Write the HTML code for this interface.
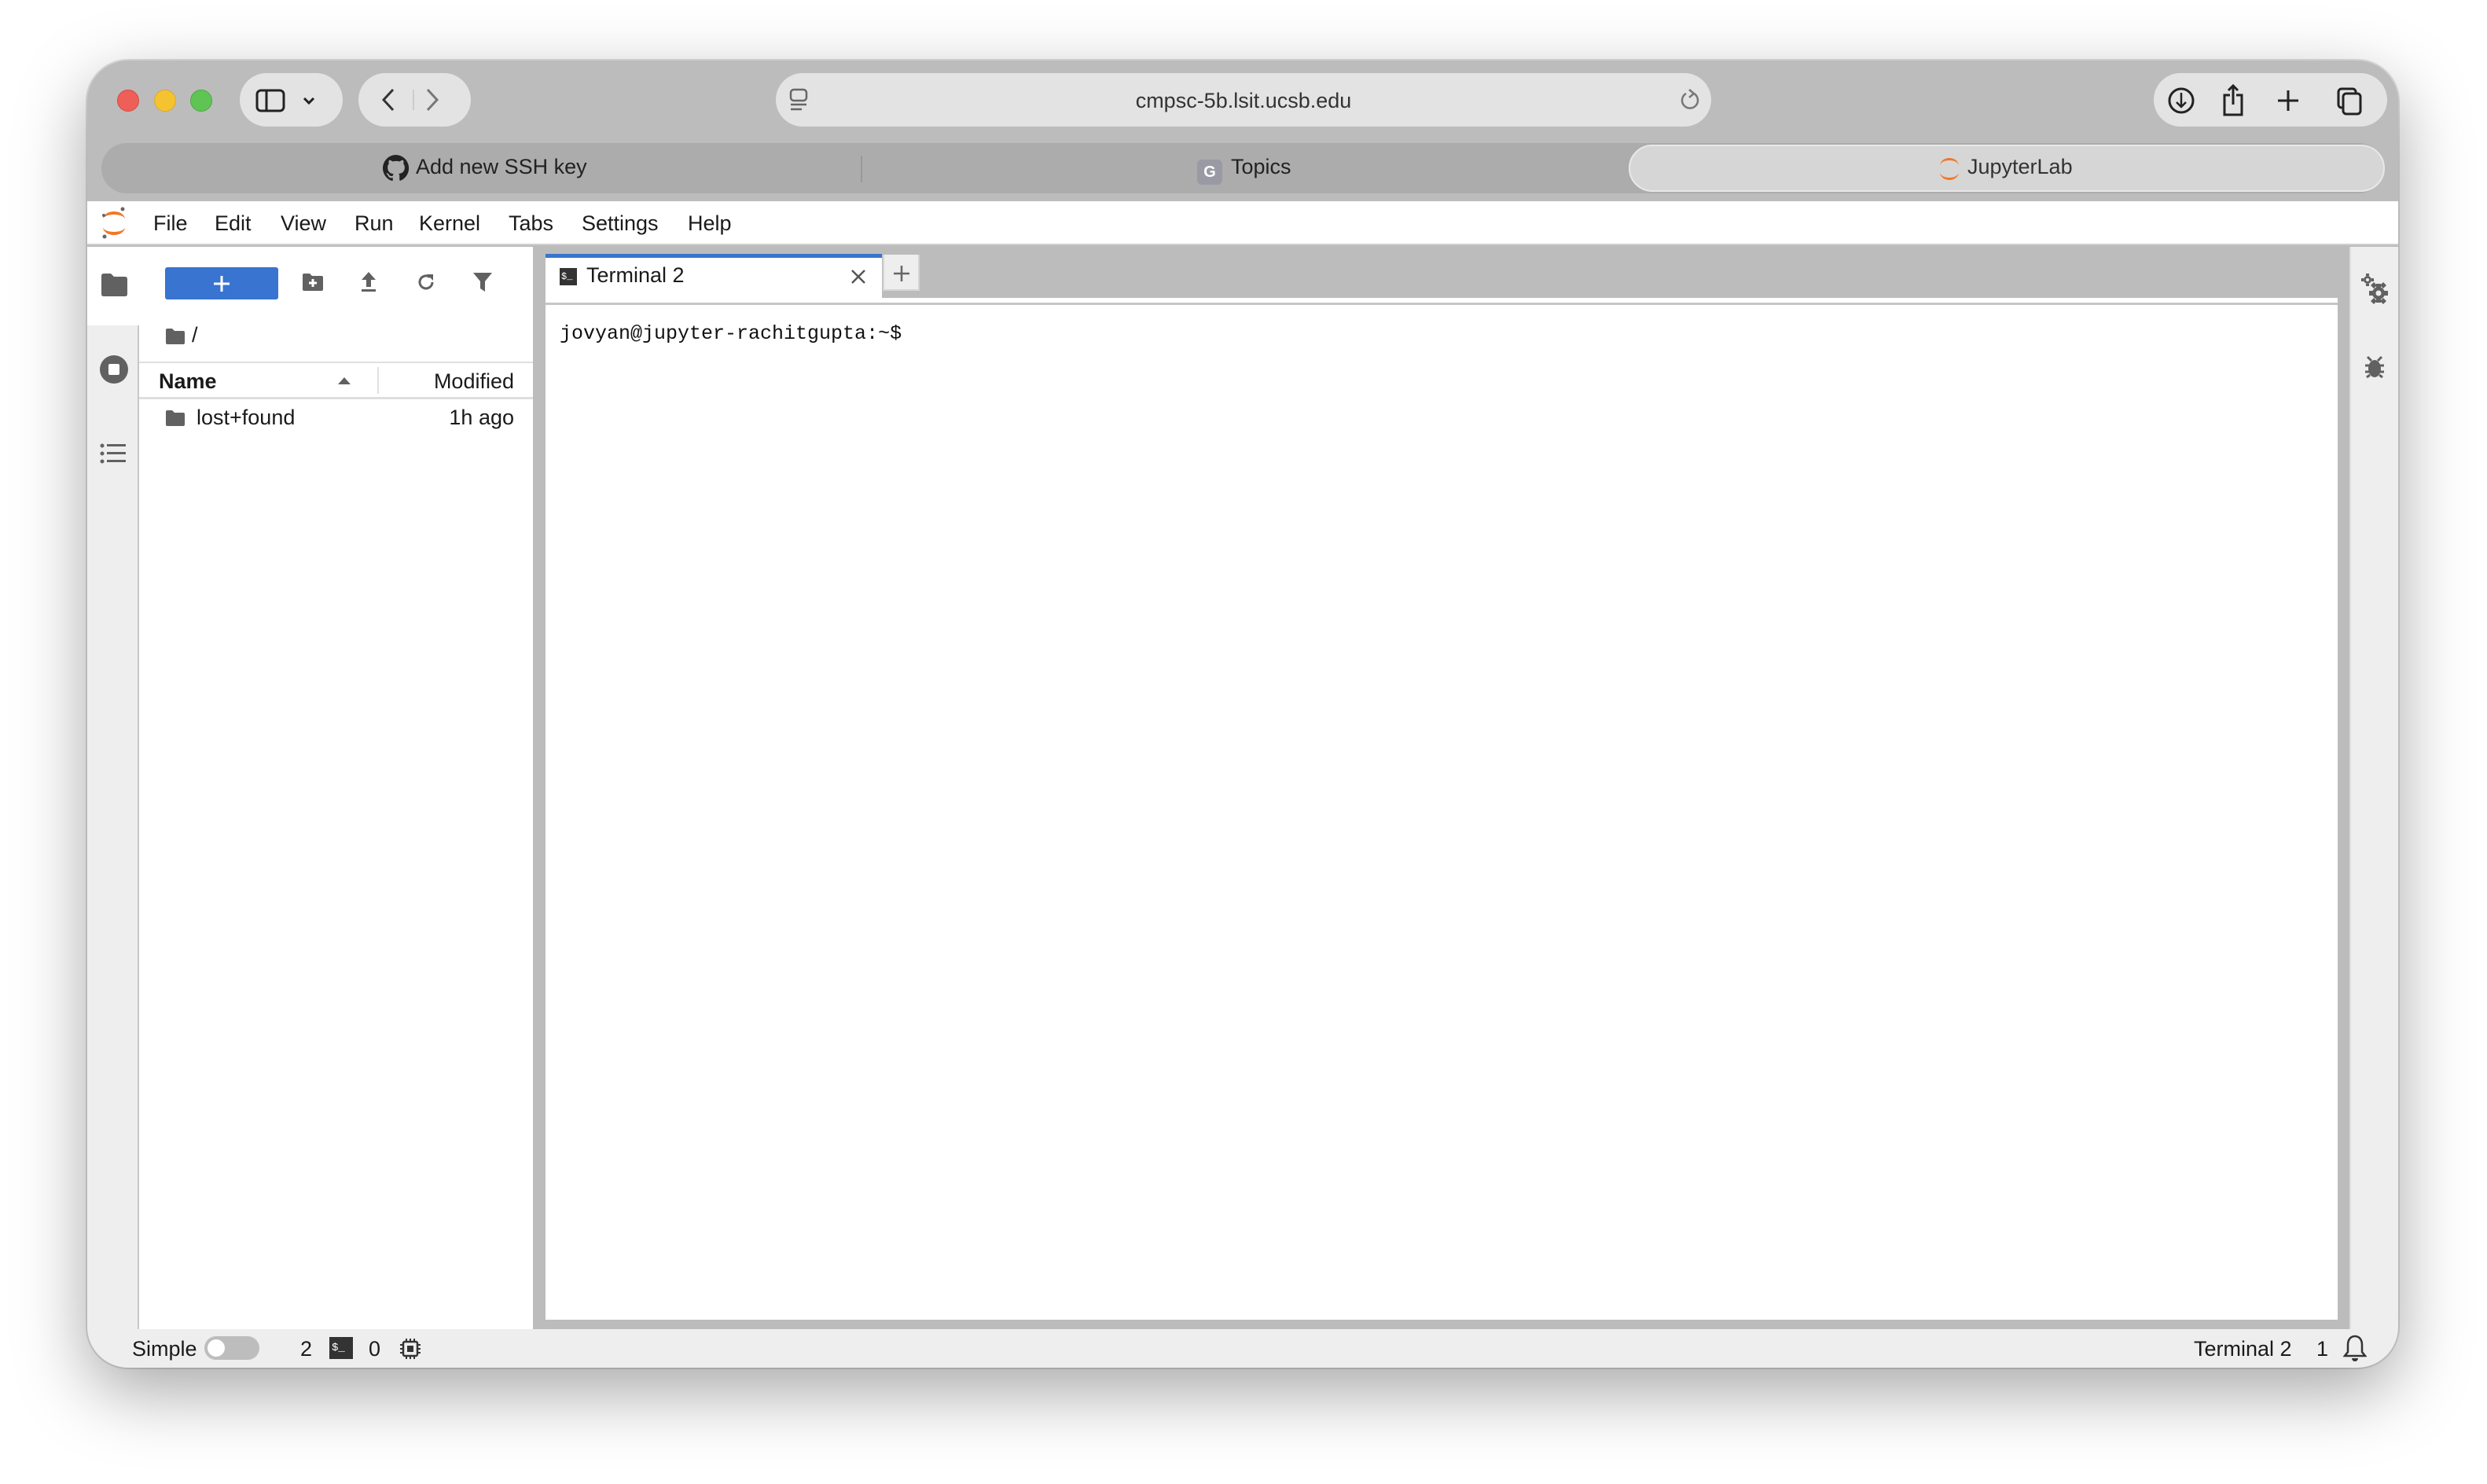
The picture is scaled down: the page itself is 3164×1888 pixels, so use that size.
<!DOCTYPE html>
<html><head><meta charset="utf-8"><style>
*{margin:0;padding:0;box-sizing:border-box}
body{width:3164px;height:1888px;background:#fff;position:relative;overflow:hidden;font-family:"Liberation Sans",Arial,sans-serif;color:#1a1a1a}
.abs{position:absolute}
#win{position:absolute;left:111px;top:77px;width:2940px;height:1663px;border-radius:52px;overflow:hidden;background:#bcbcbc;box-shadow:0 30px 90px rgba(0,0,0,.35),0 0 0 2px rgba(0,0,0,.12)}
.pill{position:absolute;background:#e3e3e3;border-radius:34px;top:16px;height:68px}
.dot{position:absolute;top:37px;width:28px;height:28px;border-radius:50%}
.t{position:absolute;font-size:27px;white-space:nowrap}
.ic{position:absolute}
</style></head><body>
<div id="win">
 <div class="dot" style="left:38px;background:#ee5f57;border:1px solid #d44b44"></div>
 <div class="dot" style="left:85px;background:#f6c330;border:1px solid #d9a92a"></div>
 <div class="dot" style="left:131px;background:#5fc454;border:1px solid #4ea845"></div>
 <div class="pill" style="left:194px;width:131px"></div>
 <svg class="ic" style="left:214px;top:35px" width="76" height="32" viewBox="0 0 76 32"><rect x="2" y="3" width="34" height="26" rx="5" fill="none" stroke="#222" stroke-width="3"/><line x1="14" y1="3" x2="14" y2="29" stroke="#222" stroke-width="3"/><path d="M62 13l6 6 6-6" fill="none" stroke="#222" stroke-width="3"/></svg>
 <div class="pill" style="left:345px;width:143px"></div>
 <svg class="ic" style="left:365px;top:33px" width="100" height="34" viewBox="0 0 100 34"><path d="M24 4L12 17l12 13" fill="none" stroke="#333" stroke-width="3"/><line x1="50" y1="4" x2="50" y2="30" stroke="#ccc" stroke-width="2"/><path d="M68 4l12 13-12 13" fill="none" stroke="#777" stroke-width="3"/></svg>
 <div class="pill" style="left:876px;width:1190px"></div>
 <svg class="ic" style="left:891px;top:34px" width="30" height="34" viewBox="0 0 30 34"><rect x="4" y="3" width="20" height="14" rx="4" fill="none" stroke="#666" stroke-width="2.5"/><line x1="4" y1="22" x2="24" y2="22" stroke="#666" stroke-width="2.5"/><line x1="4" y1="28" x2="18" y2="28" stroke="#666" stroke-width="2.5"/></svg>
 <div class="t" style="left:876px;width:1190px;text-align:center;top:36px;color:#333">cmpsc-5b.lsit.ucsb.edu</div>
 <svg class="ic" style="left:2024px;top:34px" width="30" height="32" viewBox="0 0 30 32"><path d="M20 8a10 10 0 1 1-10 0" fill="none" stroke="#777" stroke-width="2.5"/><path d="M14 3l6 5-6 5" fill="none" stroke="#777" stroke-width="2.5"/></svg>
 <div class="pill" style="left:2629px;width:297px"></div>
 <svg class="ic" style="left:2640px;top:28px" width="280" height="46" viewBox="0 0 280 46"><circle cx="24" cy="23" r="15" fill="none" stroke="#222" stroke-width="3"/><path d="M24 13v18M18 25l6 6 6-6" fill="none" stroke="#222" stroke-width="2.5"/><path d="M86 16h-7v25h22V16h-7M90 4v24M84 10l6-6 6 6" fill="none" stroke="#222" stroke-width="3"/><path d="M160 10v26M147 23h26" stroke="#222" stroke-width="3"/><rect x="224" y="8" width="22" height="24" rx="4" fill="none" stroke="#222" stroke-width="3"/><rect x="230" y="14" width="22" height="26" rx="4" fill="#e3e3e3" stroke="#222" stroke-width="3"/></svg>
 <div class="abs" style="left:18px;top:105px;width:2904px;height:64px;background:#acacac;border-radius:32px"></div>
 <div class="abs" style="left:984px;top:121px;width:2px;height:34px;background:#999"></div>
 <svg class="ic" style="left:376px;top:120px" width="34" height="34" viewBox="0 0 16 16"><path fill="#222" d="M8 0a8 8 0 0 0-2.5 15.6c.4 0 .5-.2.5-.4v-1.5c-2.2.5-2.7-1-2.7-1-.4-.9-.9-1.2-.9-1.2-.7-.5.1-.5.1-.5.8.1 1.200.8 1.2.8.7 1.3 1.9.9 2.3.7.1-.5.3-.9.5-1.1-1.8-.2-3.6-.9-3.6-4 0-.9.3-1.6.8-2.1-.1-.2-.4-1 .1-2.100 0 0 .7-.2 2.2.8a7.5 7.5 0 0 1 4 0c1.5-1 2.2-.8 2.2-.8.4 1.1.2 1.9.1 2.1.5.6.8 1.3.8 2.1 0 3.1-1.9 3.7-3.6 3.9.3.3.5.8.5 1.5v2.2c0 .2.1.5.6.4A8 8 0 0 0 8 0z"/></svg>
 <div class="t" style="left:418px;top:120px;color:#222">Add new SSH key</div>
 <div class="abs" style="left:1412px;top:126px;width:32px;height:32px;border-radius:6px;background:#9a9aa4;color:#fff;font-weight:bold;font-size:20px;text-align:center;line-height:32px">G</div>
 <div class="t" style="left:1455px;top:120px;color:#222">Topics</div>
 <div class="abs" style="left:1961px;top:107px;width:962px;height:60px;background:#d6d6d6;border-radius:30px;border:2px solid #e8e8e8"></div>
 <svg class="ic" style="left:2354px;top:121px" width="30" height="34" viewBox="0 0 30 34"><path d="M3 13a12 10 0 0 1 24 0a12 7 0 0 0-24 0z" fill="#f37726"/><path d="M3 21a12 10 0 0 0 24 0a12 7 0 0 1-24 0z" fill="#f37726"/></svg>
 <div class="t" style="left:2392px;top:120px;color:#333">JupyterLab</div>
 <div class="abs" style="left:0;top:179px;width:2940px;height:56px;background:#fff;border-bottom:2px solid #cfcfcf"></div>
 <svg class="ic" style="left:16px;top:184px" width="36" height="46" viewBox="0 0 36 46"><path d="M4 18a14 10 0 0 1 28 0a14 6 0 0 0-28 0z" fill="#f37726"/><path d="M4 28a14 10 0 0 0 28 0a14 6 0 0 1-28 0z" fill="#f37726"/><circle cx="29" cy="5" r="2.5" fill="#666"/><circle cx="5" cy="13" r="2" fill="#666"/><circle cx="6" cy="40" r="2.5" fill="#666"/></svg>
 <div class="t" style="left:84px;top:192px">File</div>
 <div class="t" style="left:162px;top:192px">Edit</div>
 <div class="t" style="left:246px;top:192px">View</div>
 <div class="t" style="left:340px;top:192px">Run</div>
 <div class="t" style="left:422px;top:192px">Kernel</div>
 <div class="t" style="left:536px;top:192px">Tabs</div>
 <div class="t" style="left:629px;top:192px">Settings</div>
 <div class="t" style="left:764px;top:192px">Help</div>
 <div class="abs" style="left:0;top:237px;width:66px;height:1377px;background:#eee;border-right:2px solid #c8c8c8"></div>
 <div class="abs" style="left:0;top:237px;width:66px;height:100px;background:#fff"></div>
 <svg class="ic" style="left:16px;top:270px" width="36" height="30" viewBox="0 0 36 30"><path d="M2 4q0-3 3-3h9l4 4h14q3 0 3 3v19q0 3-3 3H5q-3 0-3-3z" fill="#616161"/></svg>
 <svg class="ic" style="left:14px;top:373px" width="40" height="40" viewBox="0 0 40 40"><circle cx="20" cy="20" r="18" fill="#616161"/><rect x="13" y="13" width="14" height="14" rx="2" fill="#fff"/></svg>
 <svg class="ic" style="left:16px;top:486px" width="34" height="28" viewBox="0 0 34 28"><g fill="#616161"><circle cx="3" cy="4" r="2.5"/><circle cx="3" cy="14" r="2.5"/><circle cx="3" cy="24" r="2.5"/><rect x="9" y="2" width="24" height="3"/><rect x="9" y="12" width="24" height="3"/><rect x="9" y="22" width="24" height="3"/></g></svg>
 <div class="abs" style="left:66px;top:237px;width:501px;height:1377px;background:#fff"></div>
 <div class="abs" style="left:99px;top:263px;width:144px;height:41px;background:#3874d0;border-radius:3px"></div>
 <svg class="ic" style="left:159px;top:272px" width="24" height="24"><path d="M12 2v20M2 12h20" stroke="#fff" stroke-width="3"/></svg>
 <svg class="ic" style="left:273px;top:270px" width="28" height="24" viewBox="0 0 28 24"><path d="M1 3q0-2 2-2h7l3 3h12q2 0 2 2v15q0 2-2 2H3q-2 0-2-2z" fill="#616161"/><path d="M14 8v10M9 13h10" stroke="#fff" stroke-width="3"/></svg>
 <svg class="ic" style="left:346px;top:268px" width="24" height="28" viewBox="0 0 24 28"><path d="M12 1L3 11h6v9h6v-9h6z" fill="#616161"/><rect x="3" y="23" width="18" height="3" fill="#616161"/></svg>
 <svg class="ic" style="left:418px;top:269px" width="26" height="26" viewBox="0 0 26 26"><path d="M21 13a8 8 0 1 1-3-6.3" fill="none" stroke="#616161" stroke-width="3"/><path d="M14 3h8v8z" fill="#616161"/></svg>
 <svg class="ic" style="left:490px;top:268px" width="26" height="28" viewBox="0 0 26 28"><path d="M1 2h24l-9 11v13l-6-4v-9z" fill="#616161"/></svg>
 <svg class="ic" style="left:99px;top:340px" width="26" height="22" viewBox="0 0 26 22"><path d="M1 3q0-2 2-2h6l3 3h11q2 0 2 2v13q0 2-2 2H3q-2 0-2-2z" fill="#616161"/></svg>
 <div class="t" style="left:133px;top:334px">/</div>
 <div class="abs" style="left:66px;top:383px;width:501px;height:2px;background:#e0e0e0"></div>
 <div class="t" style="left:91px;top:393px;font-weight:bold">Name</div>
 <svg class="ic" style="left:318px;top:401px" width="18" height="12"><path d="M1 11L9 2l8 9z" fill="#616161"/></svg>
 <div class="abs" style="left:369px;top:390px;width:2px;height:34px;background:#e0e0e0"></div>
 <div class="t" style="left:371px;width:172px;text-align:right;top:393px">Modified</div>
 <div class="abs" style="left:66px;top:428px;width:501px;height:3px;background:#dedede"></div>
 <svg class="ic" style="left:99px;top:444px" width="26" height="22" viewBox="0 0 26 22"><path d="M1 3q0-2 2-2h6l3 3h11q2 0 2 2v13q0 2-2 2H3q-2 0-2-2z" fill="#616161"/></svg>
 <div class="t" style="left:139px;top:439px">lost+found</div>
 <div class="t" style="left:371px;width:172px;text-align:right;top:439px">1h ago</div>
 <div class="abs" style="left:567px;top:237px;width:2311px;height:1377px;background:#bcbcbc"></div>
 <div class="abs" style="left:583px;top:246px;width:428px;height:56px;background:#fff;border-top:5px solid #3874d0"></div>
 <div class="abs" style="left:601px;top:264px;width:22px;height:22px;background:#333;color:#fff;font-size:12px;line-height:22px;padding-left:2px;font-family:'Liberation Mono',monospace">$_</div>
 <div class="t" style="left:635px;top:258px">Terminal 2</div>
 <svg class="ic" style="left:970px;top:264px" width="22" height="22"><path d="M3 3l16 16M19 3L3 19" stroke="#555" stroke-width="2.5"/></svg>
 <div class="abs" style="left:1012px;top:247px;width:47px;height:46px;background:#eee;border:2px solid #d5d5d5;border-top:none"></div>
 <svg class="ic" style="left:1024px;top:259px" width="24" height="24"><path d="M12 2v20M2 12h20" stroke="#666" stroke-width="2.5"/></svg>
 <div class="abs" style="left:583px;top:302px;width:2280px;height:1300px;background:#fff"></div>
 <div class="abs" style="left:583px;top:308px;width:2280px;height:3px;background:#c6c6c6"></div>
 <div class="abs" style="left:601px;top:333px;font-family:'Liberation Mono',monospace;font-size:25px;color:#111">jovyan@jupyter-rachitgupta:~$</div>
 <div class="abs" style="left:2878px;top:237px;width:62px;height:1377px;background:#eee;border-left:2px solid #ddd"></div>
 <svg class="ic" style="left:2892px;top:270px" width="36" height="40" viewBox="0 0 36 40">
  <g fill="#616161">
   <circle cx="9" cy="9" r="5"/><path d="M7 1h4v3H7zM7 14h4v3H7zM1 7h3v4H1zM14 7h3v4h-3z"/>
   <circle cx="23" cy="26" r="8"/><path d="M20 14h6v5h-6zM20 33h6v5h-6zM11 23h5v6h-5zM30 23h5v6h-5z"/>
   <path d="M13 16l4-4 4 4-4 4zM25 16l4-4 4 4-4 4zM13 36l4-4 4 4-4 4zM25 36l4-4 4 4-4 4z"/>
  </g>
  <circle cx="9" cy="9" r="2" fill="#eee"/><circle cx="23" cy="26" r="3.5" fill="#eee"/>
 </svg>
 <svg class="ic" style="left:2896px;top:374px" width="28" height="32" viewBox="0 0 28 32"><ellipse cx="14" cy="18" rx="8" ry="11" fill="#616161"/><path d="M5 3l5 5M23 3l-5 5M2 14h24M2 22h24M4 29l4-3M24 29l-4-3" stroke="#616161" stroke-width="3"/></svg>
 <div class="abs" style="left:0;top:1614px;width:2940px;height:49px;background:#eee"></div>
 <div class="t" style="left:57px;top:1624px">Simple</div>
 <div class="abs" style="left:149px;top:1623px;width:70px;height:30px;border-radius:15px;background:#bdbdbd"></div>
 <div class="abs" style="left:153px;top:1627px;width:22px;height:22px;border-radius:50%;background:#fff"></div>
 <div class="t" style="left:271px;top:1624px">2</div>
 <div class="abs" style="left:308px;top:1624px;width:30px;height:28px;background:#333;color:#fff;font-size:14px;line-height:28px;padding-left:3px;font-family:'Liberation Mono',monospace">$_</div>
 <div class="t" style="left:358px;top:1624px">0</div>
 <svg class="ic" style="left:397px;top:1625px" width="28" height="28" viewBox="0 0 28 28"><rect x="5" y="5" width="18" height="18" rx="2" fill="none" stroke="#333" stroke-width="2.5"/><rect x="10" y="10" width="8" height="8" fill="#333"/><path d="M9 1v4M14 1v4M19 1v4M9 23v4M14 23v4M19 23v4M1 9h4M1 14h4M1 19h4M23 9h4M23 14h4M23 19h4" stroke="#333" stroke-width="2"/></svg>
 <div class="t" style="left:2680px;top:1624px">Terminal 2</div>
 <div class="t" style="left:2836px;top:1624px">1</div>
 <svg class="ic" style="left:2870px;top:1620px" width="30" height="38" viewBox="0 0 30 38"><path d="M15 3c-6 0-9 5-9 11v9l-4 5h26l-4-5v-9c0-6-3-11-9-11z" fill="none" stroke="#333" stroke-width="2.5"/><path d="M11 31a4 4 0 0 0 8 0" fill="#333"/></svg>
</div>
</body></html>
